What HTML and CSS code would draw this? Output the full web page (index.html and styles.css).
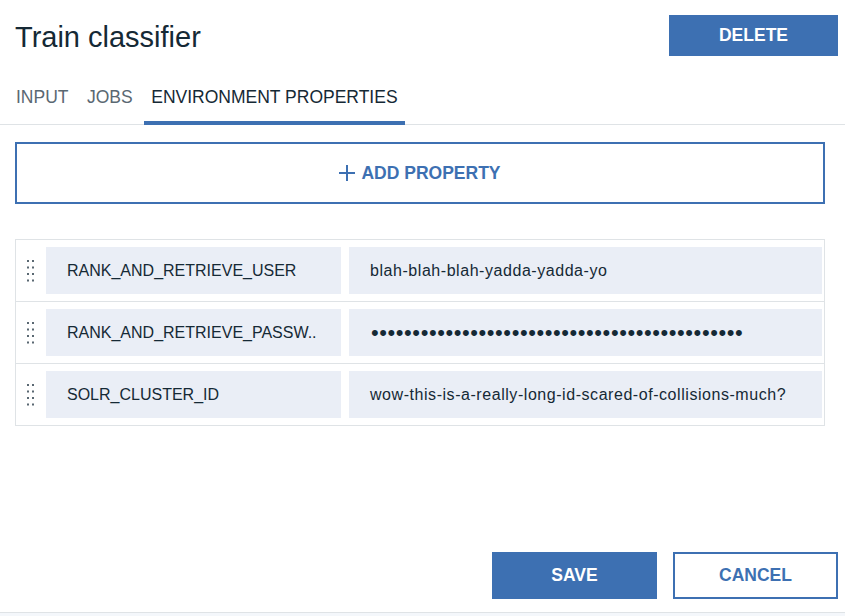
FILE: index.html
```html
<!DOCTYPE html>
<html>
<head>
<meta charset="utf-8">
<link rel="stylesheet" href="styles.css">
</head>
<body>
<div class="modal">
  <header class="header">
    <h1 class="title">Train classifier</h1>
    <button class="btn btn-primary btn-delete">DELETE</button>
  </header>
  <nav class="tabs">
    <span class="tab">INPUT</span>
    <span class="tab">JOBS</span>
    <span class="tab tab-active">ENVIRONMENT PROPERTIES</span>
  </nav>
  <section class="content">
    <button class="add-btn">
      <svg class="plus" width="16" height="16" viewBox="0 0 16 16"><path d="M8 0v16M0 8h16" stroke="#3d70b2" stroke-width="2" fill="none"/></svg>
      <span>ADD PROPERTY</span>
    </button>
    <div class="props">
      <div class="row">
        <div class="handle"><svg width="8" height="22" viewBox="0 0 8 22"><g fill="#5a6872"><rect x="0" y="0" width="2" height="2"/><rect x="5" y="0" width="2" height="2"/><rect x="0" y="6.5" width="2" height="2"/><rect x="5" y="6.5" width="2" height="2"/><rect x="0" y="13" width="2" height="2"/><rect x="5" y="13" width="2" height="2"/><rect x="0" y="19.5" width="2" height="2"/><rect x="5" y="19.5" width="2" height="2"/></g></svg></div>
        <div class="cell key">RANK_AND_RETRIEVE_USER</div>
        <div class="cell val">blah-blah-blah-yadda-yadda-yo</div>
      </div>
      <div class="row">
        <div class="handle"><svg width="8" height="22" viewBox="0 0 8 22"><g fill="#5a6872"><rect x="0" y="0" width="2" height="2"/><rect x="5" y="0" width="2" height="2"/><rect x="0" y="6.5" width="2" height="2"/><rect x="5" y="6.5" width="2" height="2"/><rect x="0" y="13" width="2" height="2"/><rect x="5" y="13" width="2" height="2"/><rect x="0" y="19.5" width="2" height="2"/><rect x="5" y="19.5" width="2" height="2"/></g></svg></div>
        <div class="cell key">RANK_AND_RETRIEVE_PASSW..</div>
        <div class="cell val secret">•••••••••••••••••••••••••••••••••••••••••••••</div>
      </div>
      <div class="row">
        <div class="handle"><svg width="8" height="22" viewBox="0 0 8 22"><g fill="#5a6872"><rect x="0" y="0" width="2" height="2"/><rect x="5" y="0" width="2" height="2"/><rect x="0" y="6.5" width="2" height="2"/><rect x="5" y="6.5" width="2" height="2"/><rect x="0" y="13" width="2" height="2"/><rect x="5" y="13" width="2" height="2"/><rect x="0" y="19.5" width="2" height="2"/><rect x="5" y="19.5" width="2" height="2"/></g></svg></div>
        <div class="cell key">SOLR_CLUSTER_ID</div>
        <div class="cell val">wow-this-is-a-really-long-id-scared-of-collisions-much?</div>
      </div>
    </div>
  </section>
  <footer class="footer">
    <button class="btn btn-primary btn-foot">SAVE</button>
    <button class="btn btn-secondary btn-foot">CANCEL</button>
  </footer>
</div>
</body>
</html>
```
FILE: styles.css
```css
* { box-sizing: border-box; }
html, body {
  margin: 0;
  padding: 0;
  height: 616px;
  overflow: hidden;
  background: #f4f7fb;
  font-family: "Liberation Sans", Arial, sans-serif;
  color: #152935;
}
.modal {
  height: 613px;
  background: #ffffff;
  border-bottom: 1px solid #dfe3e6;
  display: flex;
  flex-direction: column;
}
.header {
  display: flex;
  justify-content: space-between;
  align-items: flex-start;
  padding: 15px 7px 0 15px;
}
.title {
  margin: 2px 0 0 0;
  font-size: 29px;
  line-height: 41px;
  font-weight: 400;
  color: #152935;
}
.btn {
  font-family: "Liberation Sans", Arial, sans-serif;
  font-weight: 700;
  font-size: 17.5px;
  cursor: pointer;
  padding: 0;
}
.btn-primary {
  background: #3d70b2;
  color: #ffffff;
  border: none;
}
.btn-secondary {
  background: #ffffff;
  color: #3d70b2;
  border: 2px solid #3d70b2;
}
.btn-delete {
  width: 169px;
  height: 41px;
}
.tabs {
  display: flex;
  gap: 4.5px;
  margin-top: 29px;
  padding-left: 9px;
  border-bottom: 1px solid #dfe3e6;
}
.tab {
  font-size: 17.5px;
  line-height: 20px;
  padding: 0 7px 14px 7px;
  border-bottom: 4px solid transparent;
  margin-bottom: -1px;
  color: #5a6872;
}
.tab-active {
  color: #152935;
  border-bottom-color: #3d70b2;
}
.content {
  padding: 17px 20px 0 15px;
}
.add-btn {
  width: 100%;
  height: 62px;
  background: #ffffff;
  border: 2px solid #3d70b2;
  color: #3d70b2;
  font-family: "Liberation Sans", Arial, sans-serif;
  font-weight: 700;
  font-size: 17.5px;
  display: flex;
  align-items: center;
  justify-content: center;
  gap: 6px;
  padding: 0;
}
.plus { display: block; margin-top: -1px; }
.props {
  margin-top: 35px;
  border: 1px solid #dfe3e6;
}
.row {
  display: flex;
  align-items: center;
  height: 62px;
  padding: 7px 2px 7px 0;
  border-top: 1px solid #dfe3e6;
}
.row:first-child {
  border-top: none;
  height: 61px;
}
.handle {
  width: 30px;
  display: flex;
  justify-content: center;
}
.handle svg { display: block; margin-left: -1px; }
.cell {
  height: 47px;
  line-height: 47px;
  background: #eaeef6;
  font-size: 16px;
  padding-left: 21px;
  white-space: nowrap;
  overflow: hidden;
}
.key {
  width: 295px;
  margin-right: 8px;
}
.val {
  flex: 1;
  letter-spacing: 0.55px;
}
.secret {
  font-size: 22px;
  letter-spacing: 0.57px;
  padding-left: 22px;
}
.footer {
  margin-top: auto;
  display: flex;
  justify-content: flex-end;
  gap: 16px;
  padding: 0 7px 13px 0;
}
.btn-foot {
  width: 165px;
  height: 47px;
}
```
